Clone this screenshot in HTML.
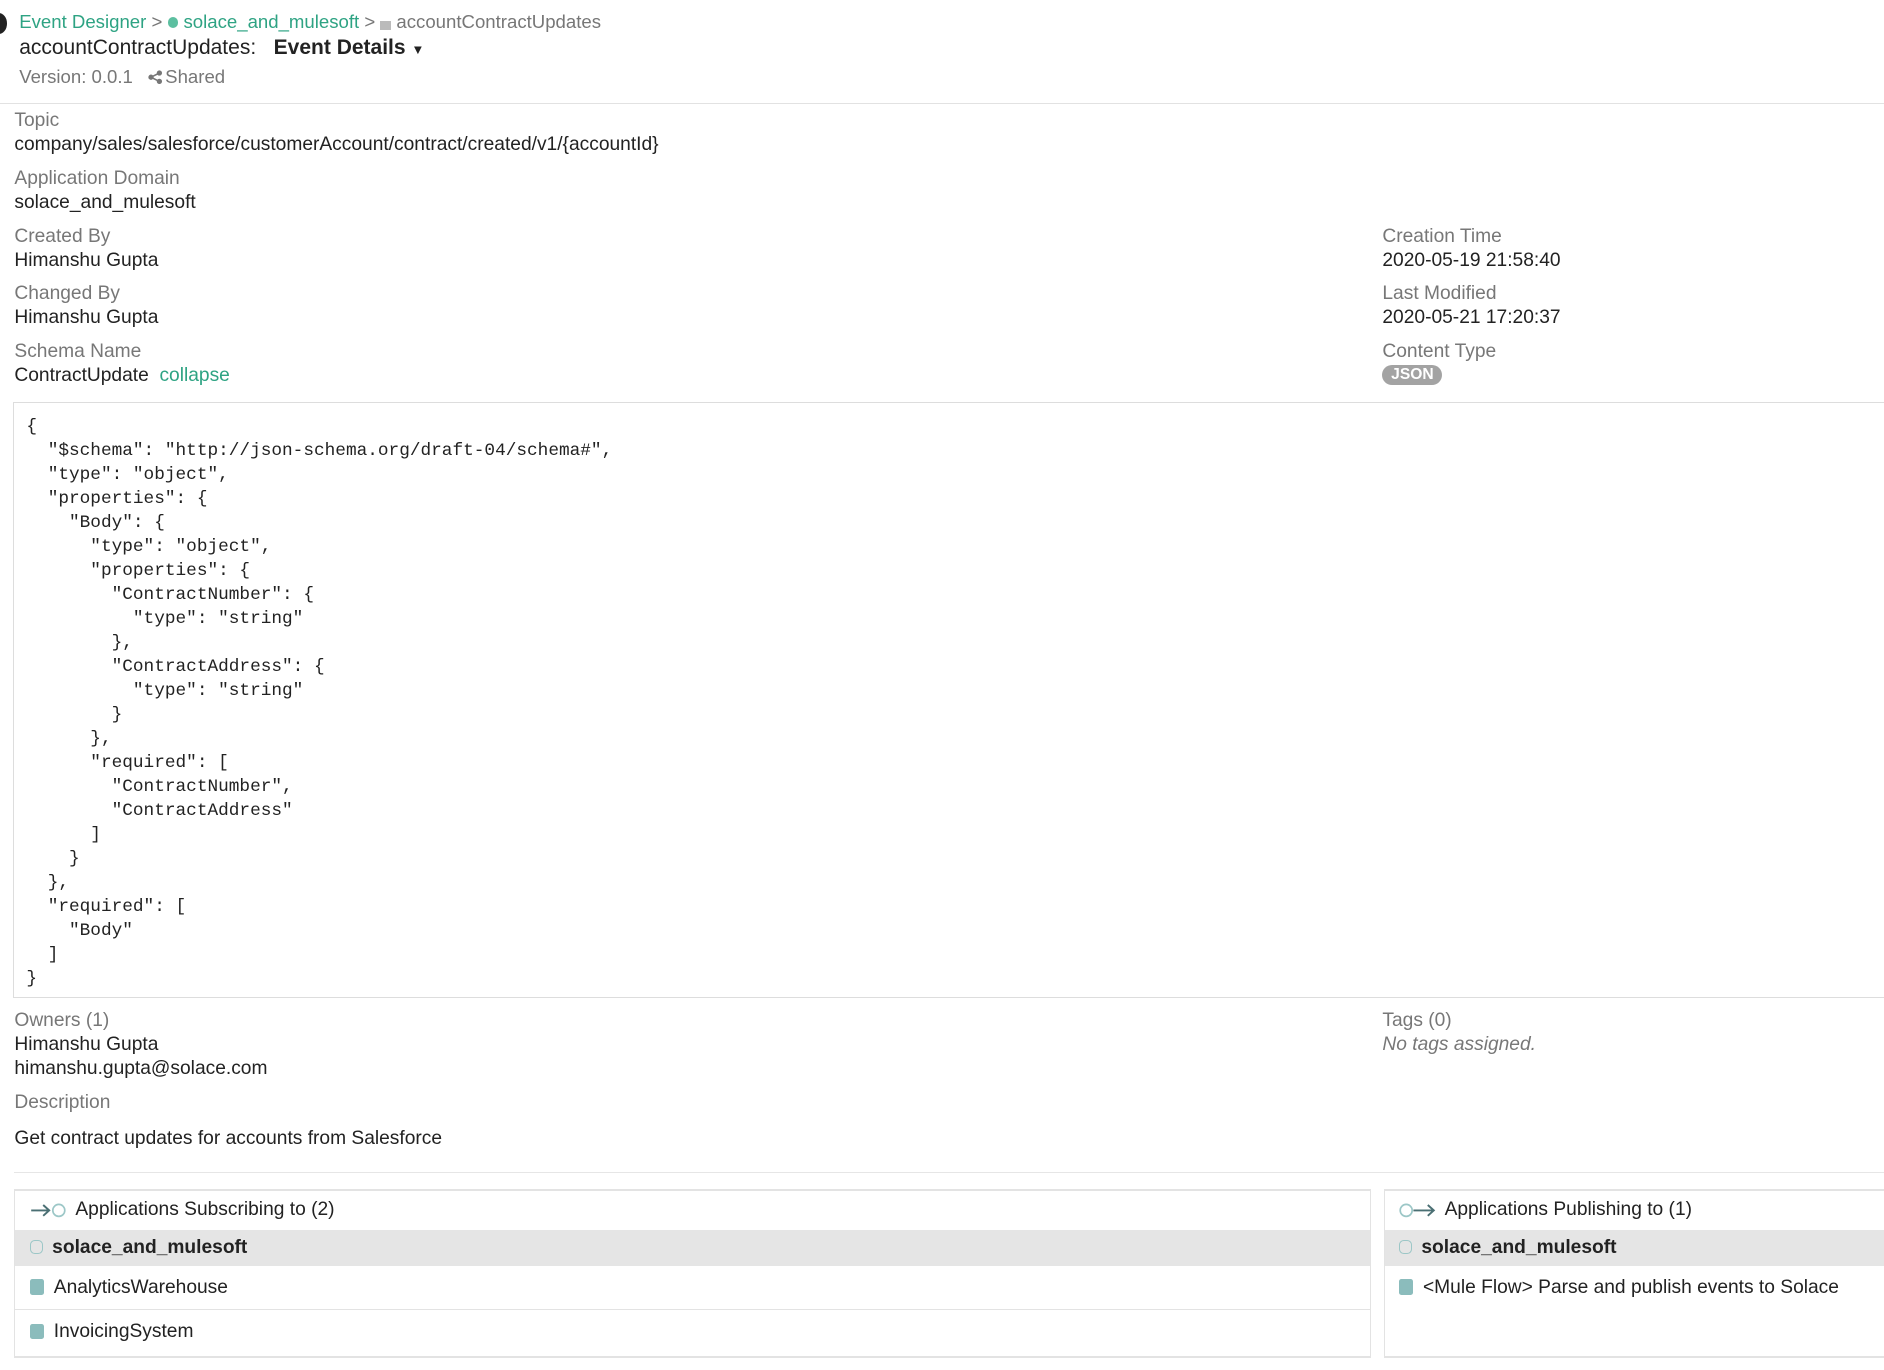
<!DOCTYPE html>
<html><head><meta charset="utf-8"><style>
html,body{margin:0;padding:0;background:#fff;}
body{width:1570px;height:1142px;zoom:1.2;overflow:hidden;font-family:"Liberation Sans",sans-serif;color:#222;font-size:16px;position:relative;}
.a{position:absolute;white-space:nowrap;}
.g{color:#777;}
.t{color:#2ea383;}
pre.a{margin:0;font-family:"Liberation Mono",monospace;font-size:14.8px;line-height:20px;color:#222;white-space:pre;}
.row{position:absolute;left:0;right:0;}
.sq{display:inline-block;width:12px;height:13px;background:#8bbcbc;border-radius:2px;vertical-align:-2px;margin-right:8px;}
.hex{display:inline-block;width:9px;height:10px;border:1.5px solid #9cc7c7;border-radius:4px;vertical-align:-1px;margin-right:8px;}
svg{vertical-align:-3px;margin-right:6px;}
</style></head><body>
<div class="a" style="left:-8px;top:11px;width:14px;height:17px;border-radius:50%;background:#222"></div>
<div class="a" style="left:16px;top:9px;font-size:15.5px"><span class="t">Event Designer</span> <span class="g">&gt;</span> <span style="display:inline-block;width:9px;height:9px;border-radius:50%;background:#5cbfa0"></span> <span class="t">solace_and_mulesoft</span> <span class="g">&gt;</span> <span style="display:inline-block;width:9px;height:8px;background:#bbb;vertical-align:-2px"></span> <span class="g">accountContractUpdates</span></div>
<div class="a" style="left:16px;top:30px;font-size:17.5px">accountContractUpdates:&nbsp;&nbsp;&nbsp;<b>Event Details</b> <span style="font-size:11px">&#9660;</span></div>
<div class="a g" style="left:16px;top:55px;font-size:15.5px">Version: 0.0.1 &nbsp;&nbsp;<svg width="12" height="12" viewBox="0 0 12 12" style="margin-right:2px;vertical-align:-1px"><circle cx="9.5" cy="2.5" r="2.2" fill="#777"/><circle cx="2.5" cy="6" r="2.2" fill="#777"/><circle cx="9.5" cy="9.5" r="2.2" fill="#777"/><path d="M9.5 2.5L2.5 6L9.5 9.5" stroke="#777" stroke-width="1.3" fill="none"/></svg>Shared</div>
<div class="a" style="left:0;right:0;top:86px;border-top:1px solid #e2e2e2"></div>

<div class="a g" style="left:12px;top:92px">Topic</div>
<div class="a" style="left:12px;top:112px">company/sales/salesforce/customerAccount/contract/created/v1/{accountId}</div>
<div class="a g" style="left:12px;top:140px">Application Domain</div>
<div class="a" style="left:12px;top:160px">solace_and_mulesoft</div>
<div class="a g" style="left:12px;top:188px">Created By</div>
<div class="a" style="left:12px;top:208px">Himanshu Gupta</div>
<div class="a g" style="left:12px;top:236px">Changed By</div>
<div class="a" style="left:12px;top:256px">Himanshu Gupta</div>
<div class="a g" style="left:12px;top:284px">Schema Name</div>
<div class="a" style="left:12px;top:304px">ContractUpdate &nbsp;<span class="t">collapse</span></div>
<div class="a g" style="left:1152px;top:188px">Creation Time</div>
<div class="a" style="left:1152px;top:208px">2020-05-19 21:58:40</div>
<div class="a g" style="left:1152px;top:236px">Last Modified</div>
<div class="a" style="left:1152px;top:256px">2020-05-21 17:20:37</div>
<div class="a g" style="left:1152px;top:284px">Content Type</div>
<div class="a" style="left:1152px;top:304px;width:50px;height:17px;border-radius:9px;background:#a3a3a3;color:#fff;font-weight:bold;font-size:13px;text-align:center;line-height:17px">JSON</div>

<div class="a" style="left:11px;top:335px;width:1570px;height:495px;border:1px solid #ddd;border-right:none"></div>
<pre class="a" style="left:22px;top:346px">{
  "$schema": "http://json-schema.org/draft-04/schema#",
  "type": "object",
  "properties": {
    "Body": {
      "type": "object",
      "properties": {
        "ContractNumber": {
          "type": "string"
        },
        "ContractAddress": {
          "type": "string"
        }
      },
      "required": [
        "ContractNumber",
        "ContractAddress"
      ]
    }
  },
  "required": [
    "Body"
  ]
}</pre>

<div class="a g" style="left:12px;top:842px">Owners (1)</div>
<div class="a" style="left:12px;top:862px">Himanshu Gupta</div>
<div class="a" style="left:12px;top:882px">himanshu.gupta@solace.com</div>
<div class="a g" style="left:1152px;top:842px">Tags (0)</div>
<div class="a g" style="left:1152px;top:862px;font-style:italic">No tags assigned.</div>
<div class="a g" style="left:12px;top:910px">Description</div>
<div class="a" style="left:12px;top:940px">Get contract updates for accounts from Salesforce</div>
<div class="a" style="left:12px;right:0;top:977px;border-top:1px solid #e6e6e6"></div>

<div class="a" style="left:12px;top:991px;width:1129px;height:137px;border:1px solid #e3e3e3;border-width:2px 1px 2px 1px">
 <div class="row" style="top:0;height:32px;line-height:32px;padding-left:12px"><svg width="32" height="14" viewBox="0 0 32 14"><path d="M1 7H16M11 2.5L16 7L11 11.5" stroke="#4a6f73" stroke-width="1.6" fill="none"/><circle cx="24" cy="7" r="5" stroke="#9cc7c7" stroke-width="1.4" fill="none"/></svg>Applications Subscribing to (2)</div>
 <div class="row" style="top:32px;height:30px;line-height:30px;background:#e5e5e5;padding-left:12px;font-weight:bold"><span class="hex"></span>solace_and_mulesoft</div>
 <div class="row" style="top:62px;height:36px;line-height:36px;padding-left:12px;border-bottom:1px solid #e3e3e3"><span class="sq"></span>AnalyticsWarehouse</div>
 <div class="row" style="top:99px;height:36px;line-height:36px;padding-left:12px"><span class="sq"></span>InvoicingSystem</div>
</div>
<div class="a" style="left:1153px;top:991px;width:420px;height:137px;border:1px solid #e3e3e3;border-width:2px 0 2px 1px">
 <div class="row" style="top:0;height:32px;line-height:32px;padding-left:12px"><svg width="32" height="14" viewBox="0 0 32 14"><circle cx="6" cy="7" r="5" stroke="#9cc7c7" stroke-width="1.4" fill="none"/><path d="M12 7H29M24 2.5L29 7L24 11.5" stroke="#4a6f73" stroke-width="1.6" fill="none"/></svg>Applications Publishing to (1)</div>
 <div class="row" style="top:32px;height:30px;line-height:30px;background:#e5e5e5;padding-left:12px;font-weight:bold"><span class="hex"></span>solace_and_mulesoft</div>
 <div class="row" style="top:62px;height:36px;line-height:36px;padding-left:12px"><span class="sq"></span>&lt;Mule Flow&gt; Parse and publish events to Solace</div>
</div>
</body></html>
